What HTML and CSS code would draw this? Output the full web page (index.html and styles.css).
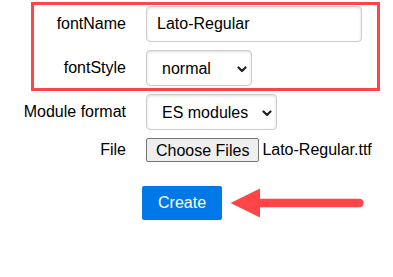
FILE: index.html
```html
<!DOCTYPE html>
<html lang="en">
<head>
<meta charset="utf-8">
<title>Create font module</title>
<link rel="stylesheet" href="styles.css">
</head>
<body>
<div class="page">
  <form class="form">
    <div class="group">
      <label class="label" for="fontName">fontName</label>
      <input class="field text-field" id="fontName" type="text" value="Lato-Regular">
    </div>
    <div class="group">
      <label class="label" for="fontStyle">fontStyle</label>
      <div class="select-wrap">
        <select class="field select select-style" id="fontStyle"><option>normal</option><option>italic</option></select>
        <svg class="chevron" width="10" height="7" viewBox="0 0 10 7"><path d="M1.5 1.5 L5 5 L8.5 1.5" fill="none" stroke="#222" stroke-width="2.2" stroke-linecap="round" stroke-linejoin="round"/></svg>
      </div>
    </div>
    <div class="group">
      <label class="label" for="moduleFormat">Module format</label>
      <div class="select-wrap">
        <select class="field select select-module" id="moduleFormat"><option>ES modules</option><option>CommonJS</option></select>
        <svg class="chevron" width="10" height="7" viewBox="0 0 10 7"><path d="M1.5 1.5 L5 5 L8.5 1.5" fill="none" stroke="#222" stroke-width="2.2" stroke-linecap="round" stroke-linejoin="round"/></svg>
      </div>
    </div>
    <div class="group group-file">
      <span class="label">File</span>
      <div class="file">
        <span class="file-btn">Choose Files</span>
        <span class="file-name">Lato-Regular.ttf</span>
      </div>
    </div>
    <div class="controls">
      <button class="btn" type="button">Create</button>
      <svg class="arrow" width="136" height="31" viewBox="0 0 136 31">
        <polygon points="0.5,15 30,0.5 30,29.5" fill="#ff4545"/>
        <line x1="29" y1="15" x2="129.5" y2="15" stroke="#ff4545" stroke-width="8.5" stroke-linecap="round"/>
      </svg>
    </div>
  </form>
  <div class="highlight"></div>
</div>
</body>
</html>
```

FILE: styles.css
```css
html, body {
  margin: 0;
  padding: 0;
  background: #fff;
}

.page {
  position: relative;
  width: 393px;
  height: 277px;
  font-family: "Liberation Sans", Arial, sans-serif;
  font-size: 16px;
  color: #000;
}

.form {
  display: flex;
  flex-direction: column;
  gap: 8px;
  padding-top: 6px;
}

.group {
  display: flex;
  align-items: center;
  gap: 20px;
}

.label {
  width: 126px;
  text-align: right;
  line-height: 18px;
}

.field {
  box-sizing: border-box;
  height: 36px;
  margin: 0;
  font-family: "Liberation Sans", Arial, sans-serif;
  font-size: 16px;
  color: #000;
  background: #fff;
  border: 1px solid #ccc;
  border-radius: 4px;
  box-shadow: inset 0 1px 3px #ddd;
  outline: none;
}

.text-field {
  width: 216px;
  padding: 0 10px;
}

.select-wrap {
  position: relative;
  display: flex;
}

.select {
  appearance: none;
  -webkit-appearance: none;
  padding: 0 0 0 15px;
}

.select-style {
  width: 106px;
}

.select-module {
  width: 131px;
}

.chevron {
  position: absolute;
  right: 5px;
  top: 16px;
  pointer-events: none;
}

.group-file {
  height: 24px;
}

.file {
  display: flex;
  align-items: center;
  gap: 3px;
}

.file-btn {
  box-sizing: border-box;
  height: 24px;
  padding: 2px 9px 0;
  line-height: 19px;
  background: #efefef;
  border: 1px solid #767676;
  border-radius: 2px;
}

.controls {
  display: flex;
  align-items: center;
  gap: 8px;
  margin-top: 16px;
  padding-left: 142px;
}

.btn {
  box-sizing: border-box;
  height: 34px;
  padding: 0 16px;
  font-family: "Liberation Sans", Arial, sans-serif;
  font-size: 16px;
  color: #fff;
  background: #0078e7;
  border: none;
  border-radius: 2px;
}

.arrow {
  display: block;
}

.highlight {
  position: absolute;
  left: 31px;
  top: 2px;
  width: 349px;
  height: 89px;
  box-sizing: border-box;
  border: 3px solid #ff4545;
  pointer-events: none;
}
```
